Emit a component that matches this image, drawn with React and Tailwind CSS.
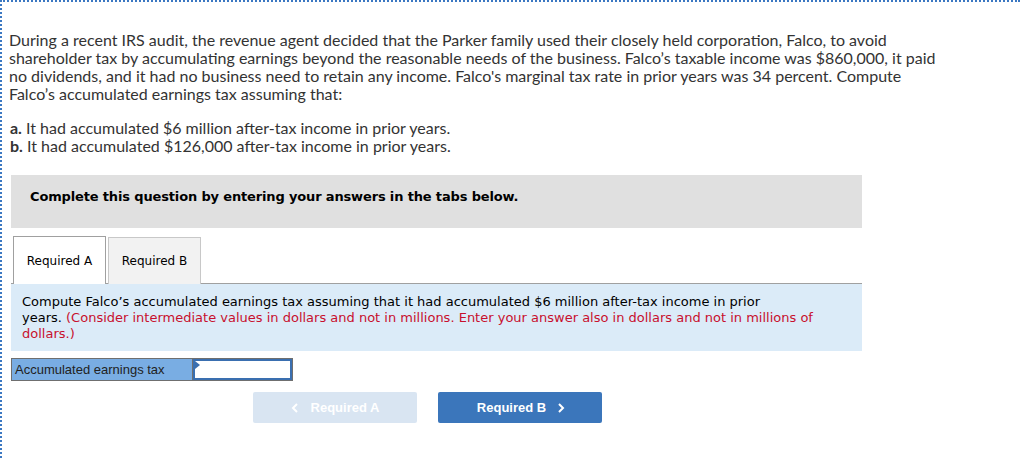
import React from "react";

function Chevron({ dir = "right", className = "" }) {
  return (
    <svg width="8" height="12" viewBox="0 0 8 12" className={className}>
      {dir === "right" ? (
        <polyline points="2,2 6,6 2,10" fill="none" stroke="currentColor" strokeWidth="2" />
      ) : (
        <polyline points="6,2 2,6 6,10" fill="none" stroke="currentColor" strokeWidth="2" />
      )}
    </svg>
  );
}

export default function App() {
  const para = { fontFamily: "Lato, 'Open Sans', Arial, sans-serif" };
  const verd = { fontFamily: "'DejaVu Sans', Verdana, sans-serif" };
  const arial = { fontFamily: "'Liberation Sans', Arial, sans-serif" };
  return (
    <div className="w-[1020px] h-[458px] bg-white overflow-hidden">
      <div className="h-full border-t-2 border-l-2 border-dotted border-[#3b78c2] pt-[29px] pl-[7px]">
        <div className="text-[16px] leading-[18px] text-[#333] whitespace-nowrap" style={para}>
          <p>
            During a recent IRS audit, the revenue agent decided that the Parker family used their closely held corporation, Falco, to avoid
            <br />
            shareholder tax by accumulating earnings beyond the reasonable needs of the business. Falco’s taxable income was $860,000, it paid
            <br />
            no dividends, and it had no business need to retain any income. Falco's marginal tax rate in prior years was 34 percent. Compute
            <br />
            Falco’s accumulated earnings tax assuming that:
          </p>
          <div className="mt-[16px] pl-[1px]">
            <p><b>a.</b> It had accumulated $6 million after-tax income in prior years.</p>
            <p><b>b.</b> It had accumulated $126,000 after-tax income in prior years.</p>
          </div>
        </div>

        <div className="ml-[2px] mt-[20px] w-[851px]">
          <div className="h-[53px] bg-[#e0e0e0] pt-[14px] pl-[19px]">
            <span className="block text-[13px] leading-[16px] font-bold text-black tracking-[-0.15px]" style={verd}>
              Complete this question by entering your answers in the tabs below.
            </span>
          </div>

          <div className="mt-[8px] flex items-end pl-[2px]">
            <div className="w-[93px] h-[48px] border border-b-0 border-[#a0a0a0] bg-white flex items-center justify-center text-[12px] text-black relative z-10" style={verd}>
              Required A
            </div>
            <div className="ml-[2px] w-[93px] h-[47px] border border-[#c8c8c8] border-b-0 bg-[#f2f2f2] flex items-center justify-center text-[12px] text-black" style={verd}>
              Required B
            </div>
          </div>
          <div className="-mt-px border-t border-[#a0a0a0] bg-[#dbebf8] pt-[10px] pb-[9px] pl-[11px] text-[13px] leading-[16px] text-black whitespace-nowrap" style={verd}>
            Compute Falco’s accumulated earnings tax assuming that it had accumulated $6 million after-tax income in prior
            <br />
            years. <span className="text-[#c8102e]">(Consider intermediate values in dollars and not in millions. Enter your answer also in dollars and not in millions of</span>
            <br />
            <span className="text-[#c8102e]">dollars.)</span>
          </div>

          <div className="mt-[7px] flex w-[282px] h-[23px] border border-[#6f6f6f]">
            <div className="w-[181px] bg-[#79ade3] border-r border-[#6f6f6f] flex items-center pl-[3px] text-[13px] text-[#222]" style={arial}>
              Accumulated earnings tax
            </div>
            <div className="flex-1 border-2 border-[#3a6fb0] bg-white relative">
              <div className="absolute left-0 top-0 w-0 h-0 border-t-[4px] border-b-[4px] border-l-[5px] border-t-transparent border-b-transparent border-l-[#3a6fb0]" />
            </div>
          </div>

          <div className="mt-[11px] flex gap-[21px] ml-[242px]">
            <div className="w-[164px] h-[31px] rounded-[2px] bg-[#d9e5f2] text-white flex items-center justify-center gap-[12px] text-[13px] font-bold" style={arial}>
              <Chevron dir="left" />
              <span>Required A</span>
            </div>
            <div className="w-[164px] h-[31px] rounded-[2px] bg-[#3b76bb] text-white flex items-center justify-center gap-[11px] text-[13px] font-bold pl-[2px]" style={arial}>
              <span>Required B</span>
              <Chevron dir="right" />
            </div>
          </div>
        </div>
      </div>
    </div>
  );
}
